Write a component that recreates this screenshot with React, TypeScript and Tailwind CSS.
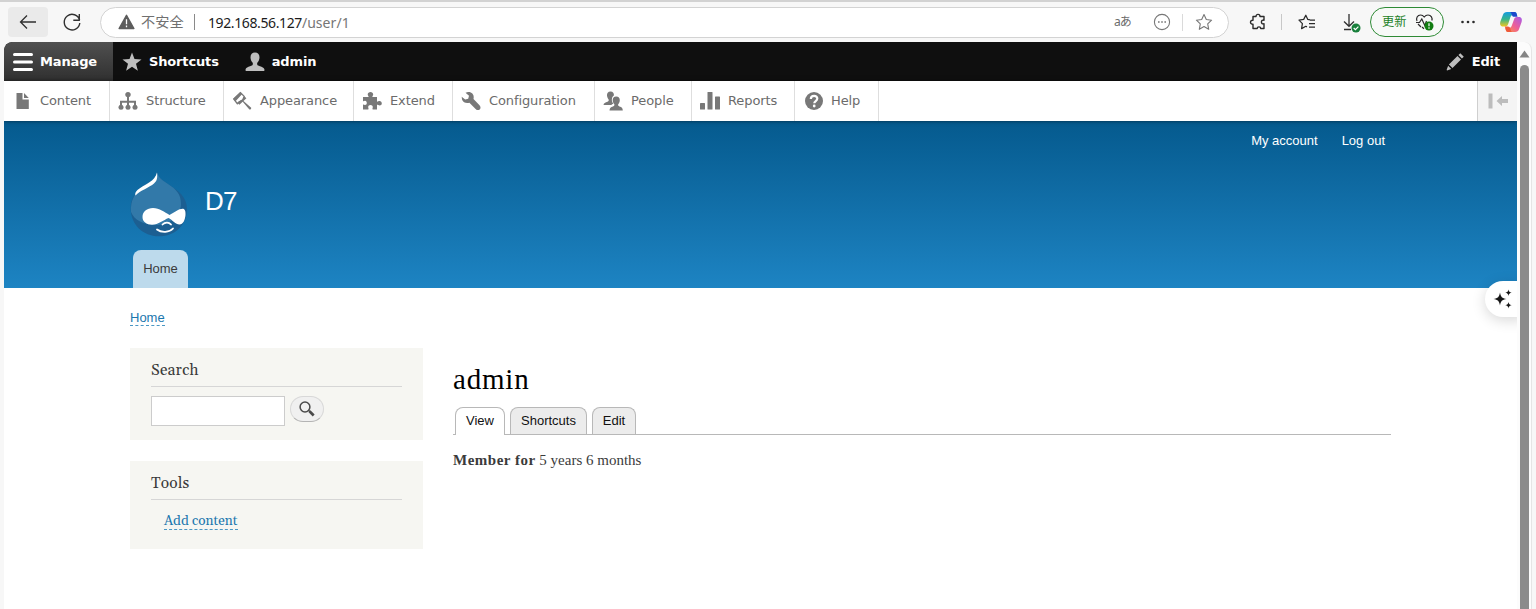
import React from "react";

type Kid = { children?: React.ReactNode };

function Glyph({ children, className = "" }: Kid & { className?: string }) {
  return (
    <svg width="20" height="20" viewBox="0 0 20 20" fill="currentColor" className={`shrink-0 ${className}`}>
      {children}
    </svg>
  );
}

function BrowserBar() {
  return (
    <div className="flex h-[42px] items-center border-t-2 border-[#d2d2d2] bg-[#f7f7f7] font-['Noto_Sans','Noto_Sans_CJK_SC',sans-serif]">
      <div className="ml-2 flex h-[30px] w-10 items-center justify-center rounded bg-[#eaeaea]">
        <svg width="18" height="16" viewBox="0 0 18 16" fill="none" stroke="#303030" strokeWidth="1.3">
          <path d="M17 8H1.5M8 1.5 1.5 8 8 14.5" />
        </svg>
      </div>
      <svg width="20" height="20" viewBox="0 0 20 20" fill="none" stroke="#303030" strokeWidth="1.4" className="ml-[14px]">
        <path d="M17.6 8.2A7.8 7.8 0 1 0 17.8 11M17.3 2v6.2h-6" />
      </svg>
      <div className="ml-[18px] flex h-[31px] w-[1129px] items-center rounded-full border border-[#d3d3d3] bg-white">
        <svg width="17" height="16" viewBox="0 0 17 16" className="ml-[17px]">
          <path d="M8.5 1.3 15.9 14.5H1.1Z" fill="#5c5c5c" stroke="#5c5c5c" strokeWidth="1.4" strokeLinejoin="round" />
          <path d="M8.5 5.3v5M8.5 11.6v1.6" stroke="#fff" strokeWidth="1.3" />
        </svg>
        <span className="ml-[6px] w-[44px] text-[14.2px] whitespace-nowrap text-[#707070]">不安全</span>
        <span className="ml-[9px] h-4 w-px bg-[#8a8a8a]" />
        <span className="ml-[13px] text-[14px] tracking-[-0.39px] whitespace-nowrap text-[#1c1c1c]">
          192.168.56.127<span className="tracking-[0.05px] text-[#767676]">/user/1</span>
        </span>
        <span className="ml-auto w-[18px] text-[12px] tracking-[-1px] whitespace-nowrap text-[#6c6c6c]">aあ</span>
        <svg width="18" height="18" viewBox="0 0 18 18" fill="none" stroke="#777" className="ml-[21px]">
          <circle cx="9" cy="9" r="7.6" strokeWidth="1.1" />
          <path d="M5 9h1.6M8.2 9h1.6M11.4 9H13" strokeWidth="1.7" />
        </svg>
        <span className="ml-[11px] h-[17px] w-px bg-[#dadada]" />
        <svg width="18" height="18" viewBox="0 0 18 18" fill="none" stroke="#777" strokeWidth="1.1" strokeLinejoin="round" className="mr-[15px] ml-3">
          <path d="m9 1.6 2.3 4.9 5.3.7-3.9 3.7 1 5.4L9 13.6l-4.7 2.7 1-5.4-3.9-3.7 5.3-.7Z" />
        </svg>
      </div>
      <svg width="18" height="18" viewBox="0 0 18 18" fill="none" stroke="#2b2b2b" strokeWidth="1.4" strokeLinejoin="round" className="ml-5">
        <path d="M4 3.5h3c0-1 .6-2.1 2-2.1s2 1.100 2 2.100h4v3.800c-1.500-.5-2.600.3-2.600 1.700s1.100 2.200 2.600 1.700v4.800h-3.300c0-.9-.7-1.600-1.700-1.600s-1.800.7-1.800 1.600H4v-4.300c-1.300.1-2.500-.6-2.500-2s1.200-2.100 2.500-2Z" />
      </svg>
      <span className="ml-[14px] h-4 w-px bg-[#c8c8c8]" />
      <svg width="18" height="17" viewBox="0 0 18 17" fill="none" stroke="#2b2b2b" strokeWidth="1.25" strokeLinejoin="round" className="ml-4">
        <path d="M12 5.800 9.800 5.400 7.800 1.200 5.700 5.400 1 6.100l3.400 3.500-.8 5 4.200-2.300 1.200.6M12 6h5M11 9.500h6M11 13h6" />
      </svg>
      <svg width="21" height="21" viewBox="0 0 21 21" fill="none" className="mt-[2px] ml-[26px]">
        <path d="M7 1v12M2 8.500 7 13.300l5-4.800M2 16.500h7" stroke="#303030" strokeWidth="1.300" />
        <circle cx="14" cy="15" r="4.500" fill="#19803c" />
        <path d="m11.700 15 1.700 1.600 3-3" stroke="#fff" strokeWidth="1.200" />
      </svg>
      <div className="ml-[7px] flex h-[30px] w-[74px] items-center rounded-full border border-[#2e8b35] bg-[#f7f9f7] pl-[11px]">
        <span className="text-[12.2px] leading-none whitespace-nowrap text-[#1d8227]">更新</span>
        <svg width="20" height="19" viewBox="0 0 20 19" fill="none" stroke="#2b2b2b" strokeWidth="1.200" className="ml-[9px]">
          <path d="M9 15.800 7 14M2 8C.8 5.500 2.300 2 5.600 2 7.500 2 8.500 3 9.200 4c.8-1 1.900-2 3.800-2 3.200 0 4.700 3 3.800 5.500M1 9.500h3.500L6.800 6l3 6.500L11.500 8M3 11l3 3" />
          <circle cx="14" cy="13" r="4.500" fill="#107c10" stroke="none" />
          <path d="M14 10.300v3M14 14.300v1.400" stroke="#fff" />
        </svg>
      </div>
      <svg width="14" height="4" viewBox="0 0 14 4" fill="#2b2b2b" className="ml-[17px]">
        <circle cx="1.500" cy="2" r="1.300" />
        <circle cx="7" cy="2" r="1.300" />
        <circle cx="12.500" cy="2" r="1.300" />
      </svg>
      <svg width="24" height="22" viewBox="0 0 24 22" className="ml-6 shrink-0">
        <defs>
          <linearGradient id="cpA" x1="0" y1="0" x2="0" y2="1">
            <stop offset="0" stopColor="#159be0" />
            <stop offset=".5" stopColor="#35b58b" />
            <stop offset="1" stopColor="#f2c61f" />
          </linearGradient>
          <linearGradient id="cpB" x1="1" y1="0" x2="0" y2="1">
            <stop offset="0" stopColor="#a55bea" />
            <stop offset=".5" stopColor="#ec5d99" />
            <stop offset="1" stopColor="#ff953c" />
          </linearGradient>
        </defs>
        <path d="M8 1h7.500c1.500 0 2 1 2.500 3H14c-1.600 0-2.200 1-2.700 2.500L9.200 13c-.6 1.700-1.400 2.500-3 2.500H4C1.200 15.500.7 13 1.400 10.500L4 3.800C4.700 1.800 5.800 1 8 1Z" fill="url(#cpA)" />
        <path d="M11 1h4.500C17 1 17.500 2 18 4l.5 1.800h-3c-1.500 0-2.200-.5-2.600-1.800C12.500 2.500 12 1.300 11 1Z" fill="#1b48cc" />
        <path d="M16 21H9c-1.500 0-2-1-2.700-4H10c1.600 0 2.300-1 2.800-2.500L15 8.500c.6-1.800 1.400-2.500 3-2.500h2c2.700 0 3.300 2.400 2.600 5L20 18.300c-.7 2-1.800 2.700-4 2.700Z" fill="url(#cpB)" />
        <path d="M13 21H9c-1.500 0-2-1-2.700-4l-.5-1.500h3c1.500 0 2.100.7 2.500 2 .4 1.500.8 3 1.700 3.500Z" fill="#ee5a3b" />
      </svg>
    </div>
  );
}

function AdminBar() {
  return (
    <div className="flex h-[39px] shrink-0 items-center rounded-tl-lg bg-[#0f0f0f] font-['DejaVu_Sans',sans-serif] text-[13px] font-bold text-white">
      <div className="flex h-full w-[109px] items-center rounded-tl-lg bg-linear-to-b from-[#505050] to-[#303030] pl-[9px]">
        <svg width="20" height="20" viewBox="0 0 20 20" stroke="#fff" strokeWidth="3" strokeLinecap="round">
          <path d="M1.500 2.500h17M1.500 10h17M1.500 17.500h17" />
        </svg>
        <span className="ml-[7px] tracking-[-0.15px]">Manage</span>
      </div>
      <div className="flex items-center pl-[9px]">
        <Glyph className="text-[#bebebe]">
          <path d="m10 .5 2.500 6.600 7 .3-5.500 4.400 1.900 6.900-5.900-4-5.900 4L6 11.800.500 7.400l7-.3Z" />
        </Glyph>
        <span className="ml-[7px] tracking-[-0.15px]">Shortcuts</span>
      </div>
      <div className="flex items-center pl-[26px]">
        <Glyph className="text-[#bebebe]">
          <path d="M10 .5c-2.800 0-4.500 1.800-4.500 4.800 0 2 .8 4 2 5.200.6.700.5 2.500-.5 3-2.300 1-6 1.500-6.500 4.300-.1.900.3 1.200 1 1.200h17c.7 0 1.100-.3 1-1.200-.5-2.800-4.200-3.300-6.500-4.300-1-.5-1.100-2.300-.5-3 1.200-1.200 2-3.200 2-5.200C14.500 2.300 12.800.5 10 .5Z" />
        </Glyph>
        <span className="ml-[7px] tracking-[-0.15px]">admin</span>
      </div>
      <div className="mr-[17px] ml-auto flex items-center">
        <Glyph className="text-[#bebebe]">
          <path d="m15.300 1.200 3.500 3.500-1.900 1.900-3.500-3.500ZM12.500 4 16 7.500l-8.500 8.600-3.600-3.600ZM3.100 13.700l3.200 3.200-4.200 1.500-.5-.5Z" />
        </Glyph>
        <span className="ml-[7px] tracking-[-0.15px]">Edit</span>
      </div>
    </div>
  );
}

const trayItems = [
  {
    label: "Content",
    size: "w-[106px]",
    icon: <path d="M4.500 2h6v6.500h6.300V18H4.500ZM12 2l4.800 5H12Z" />,
  },
  {
    label: "Structure",
    size: "w-[114px]",
    icon: (
      <>
        <circle cx="10" cy="3.600" r="2.700" />
        <path d="M10 5v12M3 16v-5.200h14V16" fill="none" stroke="currentColor" strokeWidth="2" />
        <circle cx="3" cy="16.300" r="2.500" />
        <circle cx="10" cy="16.300" r="2.500" />
        <circle cx="17" cy="16.300" r="2.500" />
      </>
    ),
  },
  {
    label: "Appearance",
    size: "w-[130px]",
    icon: (
      <>
        <path d="M1.800 8 8.500 1.700l3.700 3.600-1.400 3.500-3.500 1.900-2 2Z" fill="none" stroke="currentColor" strokeWidth="1.300" />
        <path d="M1.200 7.800 8.300 1l1.900 1.900L4 9.700l-1 .2ZM12.300 5.200l2.100 2.100-7 6.400-2.200-2 2-1.500 3.200-1.500ZM11.500 10l7.700 6.800c.2 1.200-.8 2-1.800 1.700l-6.700-7.700Z" />
      </>
    ),
  },
  {
    label: "Extend",
    size: "w-[99px]",
    icon: (
      <path d="M1 6h5.500c.5-.8-.8-1.300-.8-2.600C5.700 2 7 1 8.500 1s2.700 1 2.700 2.400c0 1.300-1.300 1.800-.7 2.600H15v4.500c.8.500 1.300-.6 2.500-.6 1.400 0 2.300 1 2.300 2.300s-.9 2.300-2.300 2.300c-1.200 0-1.700-1-2.500-.5v4.500h-4.200c-.8-.5 0-1.200 0-2.400 0-1.300-1-2.100-2.300-2.100s-2.300.8-2.300 2.100c0 1.200.8 1.900 0 2.400H1v-4.500c.3-1 1 0 2 0 1.200 0 1.800-.9 1.800-2S4.200 9.800 3 9.800c-1 0-1.700.9-2 .2Z" />
    ),
  },
  {
    label: "Configuration",
    size: "w-[142px]",
    icon: (
      <path d="M7 1c3.200-.4 6 2 5.700 5.600l-.2 1.500 6 6.200c1.500 1.600 1.200 3.400.2 4.200-1.100.9-2.800.8-4.100-.6l-6.200-6.200C5.500 12.800 2 11.500 1 8.500L.700 5.800l3.500 2.700 3-.8.8-2.900L4.500 1.800Z" />
    ),
  },
  {
    label: "People",
    size: "w-[97px]",
    icon: (
      <>
        <path d="M7.500.5C5 .5 3.800 2.200 4 4.600c.1 1.500.7 2.900 1.500 3.700.5 1.200.2 1.900-1 2.400C2.500 11.500.6 11.900.5 14h7.800c.5-.6 1.200-1 2-1.300C8.500 10.900 8.300 7 10 5.300l.9-.7C11.200 2.200 10 .5 7.500.5Z" />
        <path d="M13.200 5.500c-2.300 0-3.600 1.500-3.500 3.700.1 1.700.7 3 1.500 3.900.5 1.300.1 1.900-1.200 2.400-2.100.8-3.500 1.400-3.500 4h13.300c0-2.600-1.200-3.200-3.300-4-1.300-.5-1.700-1.100-1.200-2.400.8-.9 1.400-2.200 1.500-3.900.1-2.200-1.200-3.700-3.600-3.700Z" />
      </>
    ),
  },
  {
    label: "Reports",
    size: "w-[103px]",
    icon: (
      <>
        <rect x="0" y="12" width="5" height="6.500" rx=".6" />
        <rect x="7.500" y="1" width="5" height="17.500" rx=".6" />
        <rect x="15" y="5.500" width="5" height="13" rx=".6" />
      </>
    ),
  },
  {
    label: "Help",
    size: "w-[84px]",
    icon: (
      <>
        <circle cx="11" cy="10" r="9" />
        <path d="M7.800 8c.1-2 1.500-3.100 3.300-3.100 1.900 0 3.200 1 3.200 2.700 0 2.400-3 2.500-3 4.600" fill="none" stroke="#fff" strokeWidth="2.200" />
        <circle cx="11.200" cy="15" r="1.400" fill="#fff" />
      </>
    ),
  },
];

function AdminTray() {
  return (
    <div className="relative z-10 flex h-10 shrink-0 bg-white font-['DejaVu_Sans',sans-serif] text-[13px] text-[#6b6b6b] shadow-[0_0_4px_rgba(0,0,0,0.55)]">
      {trayItems.map((item) => (
        <div key={item.label} className={`flex shrink-0 items-center border-r border-[#dedede] pl-2 ${item.size}`}>
          <Glyph className="text-[#787878]">{item.icon}</Glyph>
          <span className="ml-2 tracking-[-0.1px]">{item.label}</span>
        </div>
      ))}
      <div className="ml-auto flex w-10 items-center justify-center border-l border-[#cfcfcf] bg-[#f4f4f4] text-[#bcbcbc]">
        <Glyph>
          <path d="M.5 2.500h4v15h-4ZM8.500 10l5.500-5v3h6v4h-6v3Z" />
        </Glyph>
      </div>
    </div>
  );
}

function DropLogo() {
  return (
    <svg width="58" height="66" viewBox="0 0 58 66" className="shrink-0">
      <path d="M27 1c1.500 6 5 8 11 12 10 6.500 19 12.500 19 25.500C57 54 45 65.300 29 65.300S.700 53.500.700 37.500C.700 27 6 20.500 12 15.500 18 11 25.500 9.500 27 1Z" fill="#1c5f92" />
      <path d="M27 1c1.500 6 5 8 11 12 8 5 13 10 13 20 0 12-11 21-25 21-12 0-22-5-25-13C0 29 6 20.500 12 15.500 18 11 25.500 9.500 27 1Z" fill="#3279a9" />
      <path d="M27 1.500c.5 4.500.5 8-3 11C19.500 16.500 10 19.500 5.500 24.500c-1-2.500 1-5 4-7 5.500-4.300 15.500-7 17.500-16Z" fill="#fff" />
      <path d="M12.500 46c0-5.500 4.500-9 10.500-9 6.500 0 11.500 4 16.500 7 4.500-2.500 9.500-6.200 13-6.200 2.500 0 3.200 2.500 3 6.200-.4 5-2.500 9.500-6 9.500-4 0-7-4.500-11-6.500-5 2-10 6.700-16.500 6.700-5.500 0-9.500-3-9.500-7.700Z" fill="#fff" />
      <path d="M32.500 53.500c2.500-2.600 6.500-2.600 8.500 0M27 58.500c4.500 3.500 12.500 3 16-1" fill="none" stroke="#fff" strokeWidth="1.800" strokeLinecap="round" />
    </svg>
  );
}

function SiteHeader() {
  return (
    <header className="flex h-[167px] shrink-0 flex-col bg-linear-to-b from-[#055a8e] to-[#1d84c3] pl-[126px] font-['Liberation_Sans',sans-serif]">
      <nav className="mr-[132px] flex h-[50px] justify-end gap-6 pt-[12px] text-[13px] leading-4 text-white">
        <span>My account</span>
        <span>Log out</span>
      </nav>
      <div className="flex h-[66px]">
        <DropLogo />
        <span className="mt-[14px] ml-[17px] text-[26px] leading-8 tracking-[-0.8px] text-white">D7</span>
      </div>
      <div className="mt-[13px] ml-[3px] flex h-[38px] w-[55px] justify-center rounded-t-lg bg-[#bddaec] pt-[11px] text-[13px] leading-4 text-[#3b3b3b]">
        Home
      </div>
    </header>
  );
}

function Block({ title, size, children }: Kid & { title: string; size: string }) {
  return (
    <section className={`w-[293px] bg-[#f6f6f2] px-[21px] ${size}`}>
      <h2 className="h-[39px] border-b border-[#d6d6d6] pt-[13px] text-[15.500px] leading-5 tracking-[0.2px] text-[#3b3b3b]">{title}</h2>
      {children}
    </section>
  );
}

function Sidebar() {
  return (
    <aside className="flex flex-col gap-[21px] font-['Gelasio','Liberation_Serif',serif]">
      <Block title="Search" size="h-[92px]">
        <div className="flex pt-[9px]">
          <div className="h-[30px] w-[134px] border border-[#ccc] bg-white" />
          <div className="ml-[5px] flex h-[26px] w-[34px] items-center justify-center rounded-full border border-[#d8d8d8] border-b-[#b4b4b4] bg-[#f0f0f0]">
            <svg width="16" height="16" viewBox="0 0 16 16" fill="none" stroke="#4a4a4a" className="-mt-px">
              <circle cx="6" cy="6" r="4.900" strokeWidth="1.500" />
              <path d="m9.500 9.300 1.500 1.400" strokeWidth="1.500" />
              <path d="m10.500 10.300 4.200 4.200" strokeWidth="2.700" />
            </svg>
          </div>
        </div>
      </Block>
      <Block title="Tools" size="h-[88px]">
        <div className="flex pt-[13px] pl-[13px]">
          <span className="border-b border-dashed border-[#4a97c4] text-[13.500px] leading-4 tracking-[0.05px] whitespace-nowrap text-[#1b77ae]">Add content</span>
        </div>
      </Block>
    </aside>
  );
}

function Profile() {
  return (
    <main className="ml-[30px] w-[938px]">
      <h1 className="mt-[13px] font-['Liberation_Serif',serif] text-[29px] leading-9 tracking-[0.8px] text-black">admin</h1>
      <div className="mt-[10px] flex h-[28px] gap-[5px] border-b border-[#b8b8b8] pl-[2px] font-['Liberation_Sans',sans-serif] text-[13px] leading-4 text-[#111]">
        <div className="flex h-[28px] w-[50px] justify-center rounded-t-lg border border-b-0 border-[#b8b8b8] bg-white pt-[5px]">View</div>
        <div className="flex w-[77px] justify-center rounded-t-lg border border-b-0 border-[#b8b8b8] bg-[#ececec] pt-[5px]">Shortcuts</div>
        <div className="flex w-[44px] justify-center rounded-t-lg border border-b-0 border-[#b8b8b8] bg-[#ececec] pt-[5px]">Edit</div>
      </div>
      <p className="mt-[15px] font-['Liberation_Serif',serif] text-[15px] leading-5 text-[#3b3b3b]">
        <b className="tracking-[0.5px]">Member for</b> 5 years 6 months
      </p>
    </main>
  );
}

export default function App() {
  return (
    <div className="flex h-[609px] w-[1536px] flex-col overflow-hidden bg-[#f7f7f7]">
      <BrowserBar />
      <div className="relative flex min-h-0 flex-1 pl-1">
        <div className="relative flex w-[1513px] flex-col overflow-hidden rounded-tl-lg bg-white">
          <AdminBar />
          <AdminTray />
          <SiteHeader />
          <div className="pl-[126px]">
            <div className="flex h-[60px] pt-[22px] font-['Liberation_Sans',sans-serif] text-[13px]">
              <span className="h-4 border-b border-dashed border-[#4a97c4] leading-[15px] text-[#1b77ae]">Home</span>
            </div>
            <div className="flex items-start">
              <Sidebar />
              <Profile />
            </div>
          </div>
          <div className="absolute top-[239px] -right-2 flex h-9 w-[40px] items-center rounded-l-full bg-white pl-[8px] shadow-[0_3px_14px_rgba(0,0,0,0.16)]">
            <svg width="20" height="20" viewBox="0 0 20 20" fill="#161616">
              <path d="M7 3.500C7.800 8 9 9.200 13.500 10 9 10.800 7.800 12 7 16.500 6.200 12 5 10.800.500 10 5 9.200 6.200 8 7 3.500ZM15.500.5c.4 2.200 1 2.800 3.200 3.200-2.200.4-2.800 1-3.200 3.200-.4-2.200-1-2.800-3.200-3.200 2.200-.4 2.800-1 3.200-3.200ZM15.500 13c.4 2.200 1 2.800 3.200 3.200-2.200.4-2.800 1-3.200 3.200-.4-2.200-1-2.800-3.200-3.200 2.200-.4 2.800-1 3.200-3.200Z" />
            </svg>
          </div>
        </div>
        <div className="flex w-[15px] flex-col items-center rounded-tr-lg border-r border-[#e5e5e5] bg-[#fcfcfc] pt-2">
          <svg width="11" height="8" viewBox="0 0 11 8" fill="#858585">
            <path d="M5.500.500 10.500 7.500H.500Z" />
          </svg>
          <div className="mt-[7px] w-[9px] flex-1 rounded-t-full bg-[#8b8b8b]" />
        </div>
      </div>
    </div>
  );
}
